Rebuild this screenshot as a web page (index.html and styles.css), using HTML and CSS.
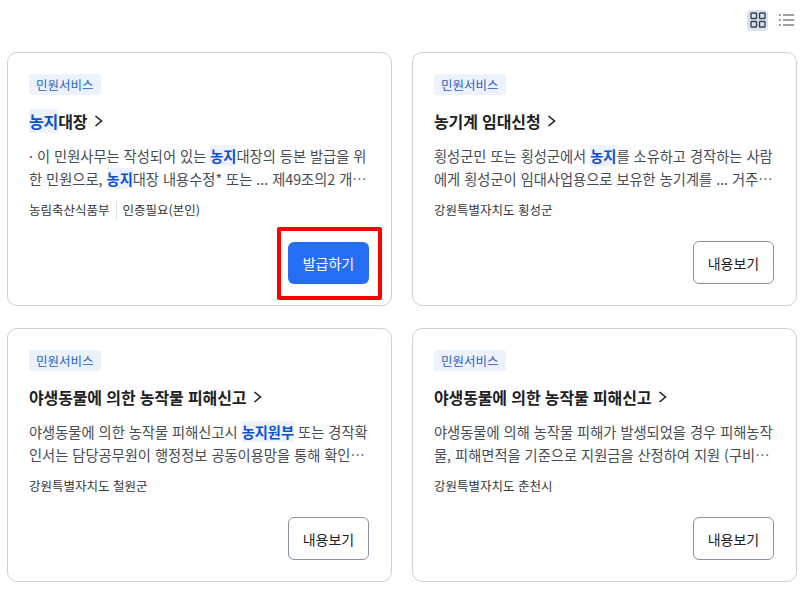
FILE: index.html
```html
<!DOCTYPE html>
<html lang="ko">
<head>
  <meta charset="UTF-8">
  <title>민원서비스 검색 결과</title>
  <link rel="stylesheet" href="styles.css">
</head>
<body>
  <div class="view-bar">
    <button class="view-btn active" type="button" aria-label="카드형">
      <svg width="16" height="16" viewBox="0 0 16 16" fill="none" stroke="#3b4350" stroke-width="1.4">
        <rect x="1" y="1" width="5.5" height="5.5" rx="0.5"/>
        <rect x="9.5" y="1" width="5.5" height="5.5" rx="0.5"/>
        <rect x="1" y="9.5" width="5.5" height="5.5" rx="0.5"/>
        <rect x="9.5" y="9.5" width="5.5" height="5.5" rx="0.5"/>
      </svg>
    </button>
    <button class="view-btn" type="button" aria-label="목록형">
      <svg width="15" height="12" viewBox="0 0 15 12" fill="none" stroke="#3b4350" stroke-width="1.2">
        <path d="M0 1h2M4 1h11M0 6h2M4 6h11M0 11h2M4 11h11"/>
      </svg>
    </button>
  </div>

  <div class="card-grid">
    <div class="card">
      <span class="badge">민원서비스</span>
      <h3 class="card-title"><span><mark>농지</mark>대장</span>
        <svg class="chevron" width="9" height="14" viewBox="0 0 9 14" fill="none" stroke="#1e2124" stroke-width="1.6"><path d="M1.5 2l6 5-6 5"/></svg>
      </h3>
      <p class="desc">· 이 민원사무는 작성되어 있는 <mark>농지</mark>대장의 등본 발급을 위한 민원으로, <mark>농지</mark>대장 내용수정* 또는 ... 제49조의2 개⋯</p>
      <div class="org"><span>농림축산식품부</span><span class="org-extra">인증필요(본인)</span></div>
      <div class="actions">
        <a class="btn btn-primary" href="#">발급하기</a>
        <div class="highlight-box"></div>
      </div>
    </div>

    <div class="card">
      <span class="badge">민원서비스</span>
      <h3 class="card-title"><span>농기계 임대신청</span>
        <svg class="chevron" width="9" height="14" viewBox="0 0 9 14" fill="none" stroke="#1e2124" stroke-width="1.6"><path d="M1.5 2l6 5-6 5"/></svg>
      </h3>
      <p class="desc">횡성군민 또는 횡성군에서 <mark>농지</mark>를 소유하고 경작하는 사람에게 횡성군이 임대사업용으로 보유한 농기계를 ... 거주⋯</p>
      <div class="org"><span>강원특별자치도 횡성군</span></div>
      <div class="actions"><a class="btn" href="#">내용보기</a></div>
    </div>

    <div class="card">
      <span class="badge">민원서비스</span>
      <h3 class="card-title"><span>야생동물에 의한 농작물 피해신고</span>
        <svg class="chevron" width="9" height="14" viewBox="0 0 9 14" fill="none" stroke="#1e2124" stroke-width="1.6"><path d="M1.5 2l6 5-6 5"/></svg>
      </h3>
      <p class="desc">야생동물에 의한 농작물 피해신고시 <mark>농지원부</mark> 또는 경작확인서는 담당공무원이 행정정보 공동이용망을 통해 확인⋯</p>
      <div class="org"><span>강원특별자치도 철원군</span></div>
      <div class="actions"><a class="btn" href="#">내용보기</a></div>
    </div>

    <div class="card">
      <span class="badge">민원서비스</span>
      <h3 class="card-title"><span>야생동물에 의한 농작물 피해신고</span>
        <svg class="chevron" width="9" height="14" viewBox="0 0 9 14" fill="none" stroke="#1e2124" stroke-width="1.6"><path d="M1.5 2l6 5-6 5"/></svg>
      </h3>
      <p class="desc">야생동물에 의해 농작물 피해가 발생되었을 경우 피해농작물, 피해면적을 기준으로 지원금을 산정하여 지원 (구비⋯</p>
      <div class="org"><span>강원특별자치도 춘천시</span></div>
      <div class="actions"><a class="btn" href="#">내용보기</a></div>
    </div>
  </div>
</body>
</html>
```

FILE: styles.css
```css
* {
  box-sizing: border-box;
}

body {
  margin: 0;
  padding: 8px 3px 0 7px;
  background: #fff;
  color: #1e2124;
  font-family: "Noto Sans CJK KR", "Noto Sans", sans-serif;
}

.view-bar {
  display: flex;
  justify-content: flex-end;
  align-items: center;
  gap: 7px;
  height: 24px;
  margin-bottom: 20px;
}

.view-btn {
  display: flex;
  align-items: center;
  justify-content: center;
  width: 22px;
  height: 21px;
  padding: 0;
  border: none;
  border-radius: 4px;
  background: none;
}

.view-btn.active {
  width: 21px;
  background: #d9e3ef;
}

.card-grid {
  display: grid;
  grid-template-columns: 385px 385px;
  grid-auto-rows: 254px;
  column-gap: 20px;
  row-gap: 22px;
}

.card {
  display: flex;
  flex-direction: column;
  align-items: flex-start;
  padding: 21px 22px 21px 21px;
  border: 1px solid #cdd1d5;
  border-radius: 10px;
  background: #fff;
}

.badge {
  padding: 0 7px;
  height: 21px;
  line-height: 21px;
  border-radius: 3px;
  background: #ecf2fe;
  color: #2a5fc4;
  font-size: 12.5px;
}

.card-title {
  display: flex;
  align-items: center;
  gap: 7px;
  margin: 13px 0 0;
  height: 26px;
  font-size: 16px;
  font-weight: 700;
  line-height: 26px;
  letter-spacing: -0.13px;
}

.desc {
  margin: 10px 0 0;
  height: 46px;
  color: #464c53;
  font-size: 14.25px;
  line-height: 23px;
}

mark {
  background: #ecf2fe;
  color: #0b50d0;
  font-weight: 700;
}

.org {
  display: flex;
  align-items: center;
  margin-top: 11px;
  font-size: 12.5px;
  line-height: 18px;
  color: #33363d;
}

.org-extra {
  margin-left: 6px;
  padding-left: 6px;
  border-left: 1px solid #dcdfe3;
}

.actions {
  position: relative;
  display: flex;
  justify-content: flex-end;
  align-self: stretch;
  margin-top: auto;
}

.btn {
  display: flex;
  align-items: center;
  justify-content: center;
  width: 81px;
  height: 43px;
  border: 1px solid #8a949e;
  border-radius: 6px;
  background: #fff;
  color: #1e2124;
  font-size: 14px;
  text-decoration: none;
}

.btn-primary {
  height: 42px;
  border: none;
  background: #256ef4;
  color: #fff;
}

.highlight-box {
  position: absolute;
  right: -13px;
  top: -15px;
  width: 105px;
  height: 73px;
  border: 4px solid #f00;
  border-radius: 2px;
}
```
